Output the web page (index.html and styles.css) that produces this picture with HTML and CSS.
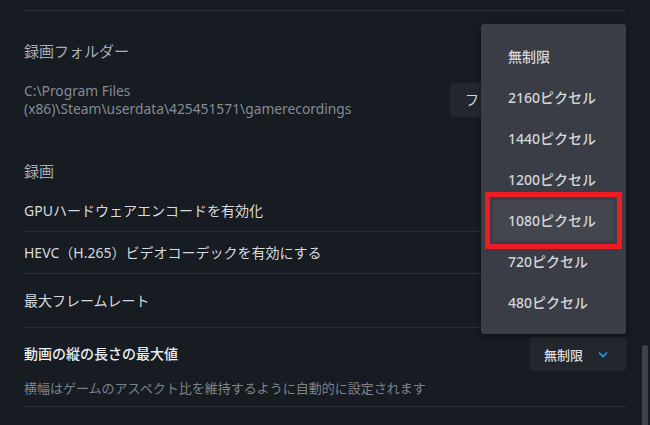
FILE: index.html
```html
<!DOCTYPE html>
<html lang="ja">
<head>
<meta charset="utf-8">
<link rel="stylesheet" href="styles.css">
</head>
<body>
<div class="page">
  <div class="panel">
    <div class="topline"></div>
    <div class="section-title first">録画フォルダー</div>
    <div class="folder-row">
      <div class="path">C:\Program Files<br>(x86)\Steam\userdata\425451571\gamerecordings</div>
      <div class="btn">フォルダーを変更</div>
    </div>
    <div class="section-title second">録画</div>
    <div class="row r-gpu"><span class="label">GPUハードウェアエンコードを有効化</span></div>
    <div class="row r-hevc"><span class="label">HEVC（H.265）ビデオコーデックを有効にする</span></div>
    <div class="row r-fps"><span class="label">最大フレームレート</span></div>
    <div class="row r-height">
      <div class="main-line">
        <span class="label strong">動画の縦の長さの最大値</span>
        <div class="select">
          <span>無制限</span>
          <svg class="chev" width="10" height="7" viewBox="0 0 10 7"><polyline points="1,1.5 5,5.5 9,1.5" fill="none" stroke="#1a9fff" stroke-width="1.6"/></svg>
        </div>
      </div>
      <div class="desc">横幅はゲームのアスペクト比を維持するように自動的に設定されます</div>
    </div>
  </div>

  <div class="menu">
    <div class="item">無制限</div>
    <div class="item">2160ピクセル</div>
    <div class="item">1440ピクセル</div>
    <div class="item">1200ピクセル</div>
    <div class="item selected">1080ピクセル</div>
    <div class="item">720ピクセル</div>
    <div class="item">480ピクセル</div>
  </div>

  <div class="scrollbar"></div>
</div>
</body>
</html>
```

FILE: styles.css
```css
html, body {
  margin: 0;
  padding: 0;
}
body {
  background: #171b22;
  font-family: "Noto Sans", "Noto Sans CJK JP", sans-serif;
  color: #dcdedf;
  width: 650px;
  height: 425px;
  overflow: hidden;
}
.page {
  position: relative;
  display: flow-root;
  width: 650px;
  height: 425px;
  overflow: hidden;
}
.panel {
  width: 602px;
  padding-left: 24px;
  padding-top: 10px;
}
.topline {
  height: 1px;
  background: #2b2f37;
}
.section-title {
  font-size: 15px;
  line-height: 20px;
  color: #a9adb2;
}
.section-title.first {
  margin-top: 30px;
}
.section-title.second {
  margin-top: 44px;
}
.folder-row {
  margin-top: 22px;
  height: 34px;
  display: flex;
  align-items: center;
  justify-content: space-between;
}
.path {
  font-size: 13.8px;
  line-height: 18px;
  color: #858b93;
}
.btn {
  width: 146px;
  height: 34px;
  padding-left: 15px;
  padding-right: 15px;
  box-sizing: content-box;
  background: #23262d;
  border-radius: 2px;
  font-size: 14px;
  line-height: 34px;
  color: #d6d8da;
  white-space: nowrap;
  overflow: hidden;
}
.row {
  border-bottom: 1px solid #2b2f37;
  display: flex;
  align-items: center;
}
.label {
  font-size: 14px;
  line-height: 20px;
  color: #d8dadc;
}
.label.strong {
  color: #eceeef;
  font-weight: 500;
}
.r-gpu {
  margin-top: 9px;
  height: 41px;
}
.r-hevc {
  height: 41px;
}
.r-fps {
  height: 53px;
}
.r-height {
  display: block;
  padding-top: 9px;
  padding-bottom: 10px;
}
.main-line {
  display: flex;
  align-items: center;
  justify-content: space-between;
  height: 34px;
}
.select {
  width: 96px;
  height: 34px;
  box-sizing: border-box;
  padding-left: 14px;
  padding-right: 18px;
  background: #23262d;
  border-radius: 3px;
  display: flex;
  align-items: center;
  justify-content: space-between;
  font-size: 13px;
  font-weight: 500;
  color: #dcdedf;
}
.chev {
  display: block;
  margin-top: 1px;
}
.desc {
  margin-top: 9px;
  font-size: 13px;
  line-height: 16px;
  color: #7d838b;
}
.menu {
  position: absolute;
  left: 481px;
  top: 24px;
  width: 145px;
  box-sizing: border-box;
  padding: 11.5px 12px;
  background: #3a3d45;
  border-radius: 3px;
  box-shadow: 0 2px 6px rgba(0, 0, 0, 0.35);
}
.item {
  height: 41px;
  padding-left: 15px;
  font-size: 14px;
  font-weight: 500;
  line-height: 41px;
  color: #d3d5d8;
}
.item.selected {
  background: #43464e;
  outline: 5px solid #ed1c24;
  outline-offset: 3px;
}
.scrollbar {
  position: absolute;
  left: 642px;
  top: 345px;
  width: 6px;
  height: 80px;
  border-radius: 3px 3px 0 0;
  background: #3c424c;
}
```
